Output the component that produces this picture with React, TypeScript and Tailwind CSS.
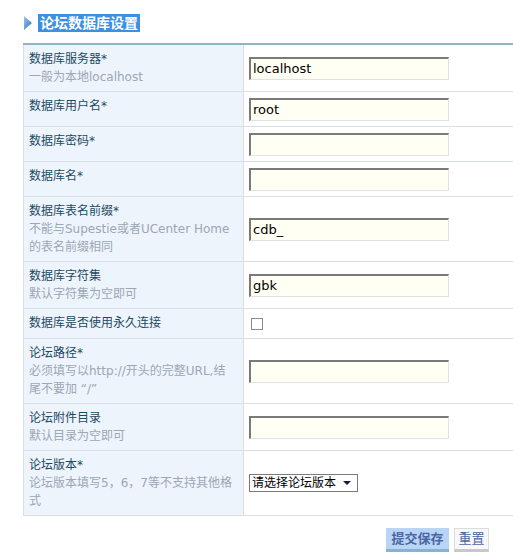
import React from 'react';

type Row = {
  label: string;
  hint?: React.ReactNode;
  field: 'input' | 'checkbox' | 'select';
  value?: string;
};

const rows: Row[] = [
  { label: '数据库服务器*', hint: '一般为本地localhost', field: 'input', value: 'localhost' },
  { label: '数据库用户名*', field: 'input', value: 'root' },
  { label: '数据库密码*', field: 'input', value: '' },
  { label: '数据库名*', field: 'input', value: '' },
  {
    label: '数据库表名前缀*',
    hint: (
      <>
        不能与Supestie或者UCenter Home
        <br />
        的表名前缀相同
      </>
    ),
    field: 'input',
    value: 'cdb_',
  },
  { label: '数据库字符集', hint: '默认字符集为空即可', field: 'input', value: 'gbk' },
  { label: '数据库是否使用永久连接', field: 'checkbox' },
  {
    label: '论坛路径*',
    hint: (
      <>
        必须填写以http://开头的完整URL,结
        <br />
        尾不要加 “/”
      </>
    ),
    field: 'input',
    value: '',
  },
  { label: '论坛附件目录', hint: '默认目录为空即可', field: 'input', value: '' },
  {
    label: '论坛版本*',
    hint: (
      <>
        论坛版本填写5，6，7等不支持其他格
        <br />
        式
      </>
    ),
    field: 'select',
  },
];

const font = "font-['DejaVu_Sans','Noto_Sans_CJK_SC',sans-serif]";

function Field({ row }: { row: Row }) {
  if (row.field === 'checkbox') {
    return <span className="ml-[2px] block h-[12px] w-[12px] border border-[#8a8a8a] bg-white" />;
  }
  if (row.field === 'select') {
    return (
      <div className="flex h-[18px] w-[109px] items-center border border-[#7a7a7a] bg-white pl-[2px] text-[12px] leading-none text-black">
        <span className="flex-1 whitespace-nowrap">请选择论坛版本</span>
        <svg width="8" height="4" viewBox="0 0 8 4" className="mr-[6px]">
          <polygon points="0,0 8,0 4,4" fill="#1a1a3a" />
        </svg>
      </div>
    );
  }
  return (
    <div className="flex h-[23px] w-[200px] items-center border-t-2 border-l-2 border-r border-b border-t-[#7a7a7a] border-l-[#7a7a7a] border-r-[#e2e2e2] border-b-[#e2e2e2] bg-[#fffff4] pl-[2px] text-[13px] text-black">
      {row.value}
    </div>
  );
}

export default function App() {
  return (
    <div className={`min-h-[557px] w-[513px] bg-white ${font} text-[12px]`}>
      <div className="flex items-center pt-[14px] pl-[24px]">
        <svg width="8" height="14" viewBox="0 0 8 14">
          <defs>
            <linearGradient id="tri" x1="0" y1="0" x2="1" y2="1">
              <stop offset="0" stopColor="#9cc8f0" />
              <stop offset="1" stopColor="#2f6fc0" />
            </linearGradient>
          </defs>
          <polygon points="0,0 8,7 0,14" fill="url(#tri)" />
        </svg>
        <h2 className="ml-[6px] bg-[#3d8fdf] px-[2px] text-[14px] leading-[18px] font-bold text-white">
          论坛数据库设置
        </h2>
      </div>

      <div className="mt-[11px] ml-[23px] border-t-2 border-[#8fb3c4]">
        {rows.map((row) => (
          <div key={row.label} className="flex border-b border-[#d9dfe5]">
            <div className="w-[221px] shrink-0 border-r border-l border-[#d9dfe5] bg-[#eef4fb] py-[5px] pl-[5px] leading-[18px]">
              <div className="text-[#1c4a63]">{row.label}</div>
              {row.hint && <div className="text-[#9ba7b5]">{row.hint}</div>}
            </div>
            <div
              className={`flex flex-1 items-center pl-[5px] ${
                row.field === 'checkbox' ? 'min-h-[29px]' : 'min-h-[34px]'
              }`}
            >
              <Field row={row} />
            </div>
          </div>
        ))}
      </div>

      <div className="mt-[12px] flex justify-end gap-[5px] pr-[24px]">
        <button className="h-[24px] w-[63px] border-b-[3px] border-[#86b3cf] bg-[#b9d5f5] text-[13px] font-bold text-[#4a66a6]">
          提交保存
        </button>
        <button className="h-[24px] w-[35px] border border-b-[3px] border-[#dcdcdc] border-b-[#c8c8c8] bg-[#f8f8f8] text-[13px] text-[#4a66a6]">
          重置
        </button>
      </div>
    </div>
  );
}
